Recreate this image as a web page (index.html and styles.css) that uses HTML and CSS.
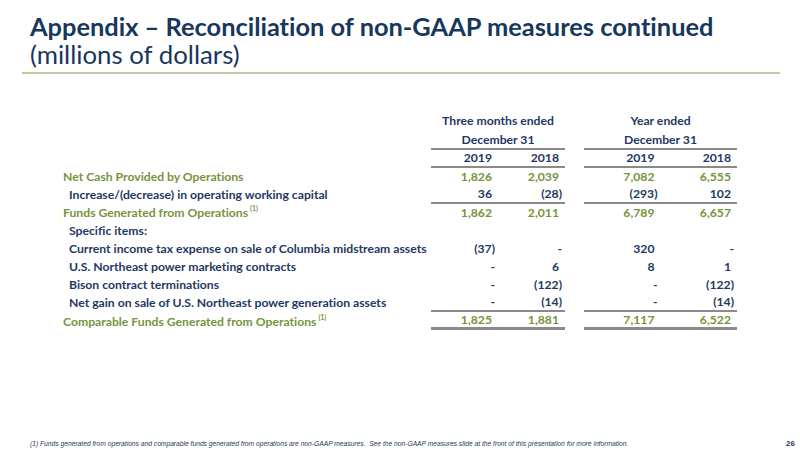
FILE: index.html
```html
<!DOCTYPE html>
<html lang="en">

<head>
    <meta charset="UTF-8">
    <title>Appendix - Reconciliation of non-GAAP measures</title>
    <link rel="stylesheet" href="styles.css">
</head>

<body>
    <div class="slide">
        <div class="head">
            <h1>Appendix – Reconciliation of non-GAAP measures continued</h1>
            <p class="sub">(millions of dollars)</p>
        </div>

        <table class="recon">
            <colgroup>
                <col class="col-label">
                <col class="col-q">
                <col class="col-q">
                <col class="col-gap">
                <col class="col-y">
                <col class="col-y">
            </colgroup>
            <tr class="period first">
                <td></td>
                <td colspan="2">Three months ended</td>
                <td></td>
                <td colspan="2">Year ended</td>
            </tr>
            <tr class="period ruled">
                <td></td>
                <td colspan="2" class="line">December 31</td>
                <td></td>
                <td colspan="2" class="line">December 31</td>
            </tr>
            <tr class="years ruled">
                <td></td>
                <td class="num line">2019</td>
                <td class="num line">2018</td>
                <td></td>
                <td class="num line">2019</td>
                <td class="num line">2018</td>
            </tr>
            <tr class="total">
                <td>Net Cash Provided by Operations</td>
                <td class="num">1,826</td>
                <td class="num">2,039</td>
                <td></td>
                <td class="num">7,082</td>
                <td class="num">6,555</td>
            </tr>
            <tr class="item ruled">
                <td>Increase/(decrease) in operating working capital</td>
                <td class="num line">36</td>
                <td class="num line neg">(28)</td>
                <td></td>
                <td class="num line neg">(293)</td>
                <td class="num line">102</td>
            </tr>
            <tr class="total">
                <td>Funds Generated from Operations<sup>(1)</sup></td>
                <td class="num">1,862</td>
                <td class="num">2,011</td>
                <td></td>
                <td class="num">6,789</td>
                <td class="num">6,657</td>
            </tr>
            <tr class="item">
                <td>Specific items:</td>
                <td></td>
                <td></td>
                <td></td>
                <td></td>
                <td></td>
            </tr>
            <tr class="item">
                <td>Current income tax expense on sale of Columbia midstream assets</td>
                <td class="num neg">(37)</td>
                <td class="num neg">-</td>
                <td></td>
                <td class="num">320</td>
                <td class="num neg">-</td>
            </tr>
            <tr class="item">
                <td>U.S. Northeast power marketing contracts</td>
                <td class="num neg">-</td>
                <td class="num">6</td>
                <td></td>
                <td class="num">8</td>
                <td class="num">1</td>
            </tr>
            <tr class="item">
                <td>Bison contract terminations</td>
                <td class="num neg">-</td>
                <td class="num neg">(122)</td>
                <td></td>
                <td class="num neg">-</td>
                <td class="num neg">(122)</td>
            </tr>
            <tr class="item ruled">
                <td>Net gain on sale of U.S. Northeast power generation assets</td>
                <td class="num line neg">-</td>
                <td class="num line neg">(14)</td>
                <td></td>
                <td class="num line neg">-</td>
                <td class="num line neg">(14)</td>
            </tr>
            <tr class="total ruled last">
                <td>Comparable Funds Generated from Operations<sup>(1)</sup></td>
                <td class="num line">1,825</td>
                <td class="num line">1,881</td>
                <td></td>
                <td class="num line">7,117</td>
                <td class="num line">6,522</td>
            </tr>
        </table>

        <div class="foot">
            <p class="note">(1) Funds generated from operations and comparable funds generated from operations are non-GAAP measures.&nbsp; See the non-GAAP measures slide at the front of this presentation for more information.</p>
            <span class="page">26</span>
        </div>
    </div>
</body>

</html>
```

FILE: styles.css
```css
body {
    margin: 0;
    background-color: #fff;
    font-family: Lato, "Open Sans", sans-serif;
    font-variant-ligatures: none;
}

.slide {
    width: 800px;
    height: 450px;
    display: flex;
    flex-direction: column;
    overflow: hidden;
}

/* title block with the khaki rule under it */
.head {
    margin: 0 20px 0 22px;
    padding: 14px 0 4px 8px;
    border-bottom: 2px solid #c5c79c;
    color: #17375e;
}

.head h1 {
    margin: 0;
    font-size: 25.4px;
    line-height: 25px;
    font-weight: bold;
}

.head .sub {
    margin: 1px 0 0;
    font-size: 25.8px;
    line-height: 28px;
}

/* reconciliation table */
.recon {
    margin: 38px 0 0 63px;
    width: 674px;
    table-layout: fixed;
    border-collapse: separate;
    border-spacing: 0;
    font-size: 12.2px;
    font-weight: bold;
    color: #1f3864;
}

.col-label {
    width: 368px;
}

.col-q {
    width: 67px;
}

.col-gap {
    width: 19px;
}

.col-y {
    width: 76.5px;
}

.recon td {
    height: 18px;
    padding: 0;
    line-height: 18px;
    white-space: nowrap;
    overflow: visible;
}

.recon .first td {
    height: 20px;
    vertical-align: top;
}

.recon .ruled td {
    height: 16px;
    line-height: 16px;
}

.period td {
    text-align: center;
}

.recon .num {
    text-align: right;
    padding-right: 6px;
}

.recon .neg {
    padding-right: 3px;
}

.recon .line {
    border-bottom: 2px solid #8a8a8a;
}

.total td {
    color: #77933c;
}

.recon .last td {
    height: 15px;
    line-height: 15px;
}

.recon .last .line {
    border-bottom-width: 3px;
}

.item td:first-child {
    padding-left: 6px;
}

.recon sup {
    font-size: 7px;
    line-height: 0;
    vertical-align: 6px;
    margin-left: 2px;
}

/* footnote and page number */
.foot {
    margin-top: auto;
    display: flex;
    justify-content: space-between;
    align-items: baseline;
    padding: 0 5px 2px 30px;
    color: #1f3864;
}

.note {
    margin: 0;
    font-family: "Liberation Sans", Arial, sans-serif;
    font-size: 6.7px;
    font-style: italic;
}

.page {
    font-family: "Liberation Sans", Arial, sans-serif;
    font-size: 8px;
    font-weight: bold;
}
```
